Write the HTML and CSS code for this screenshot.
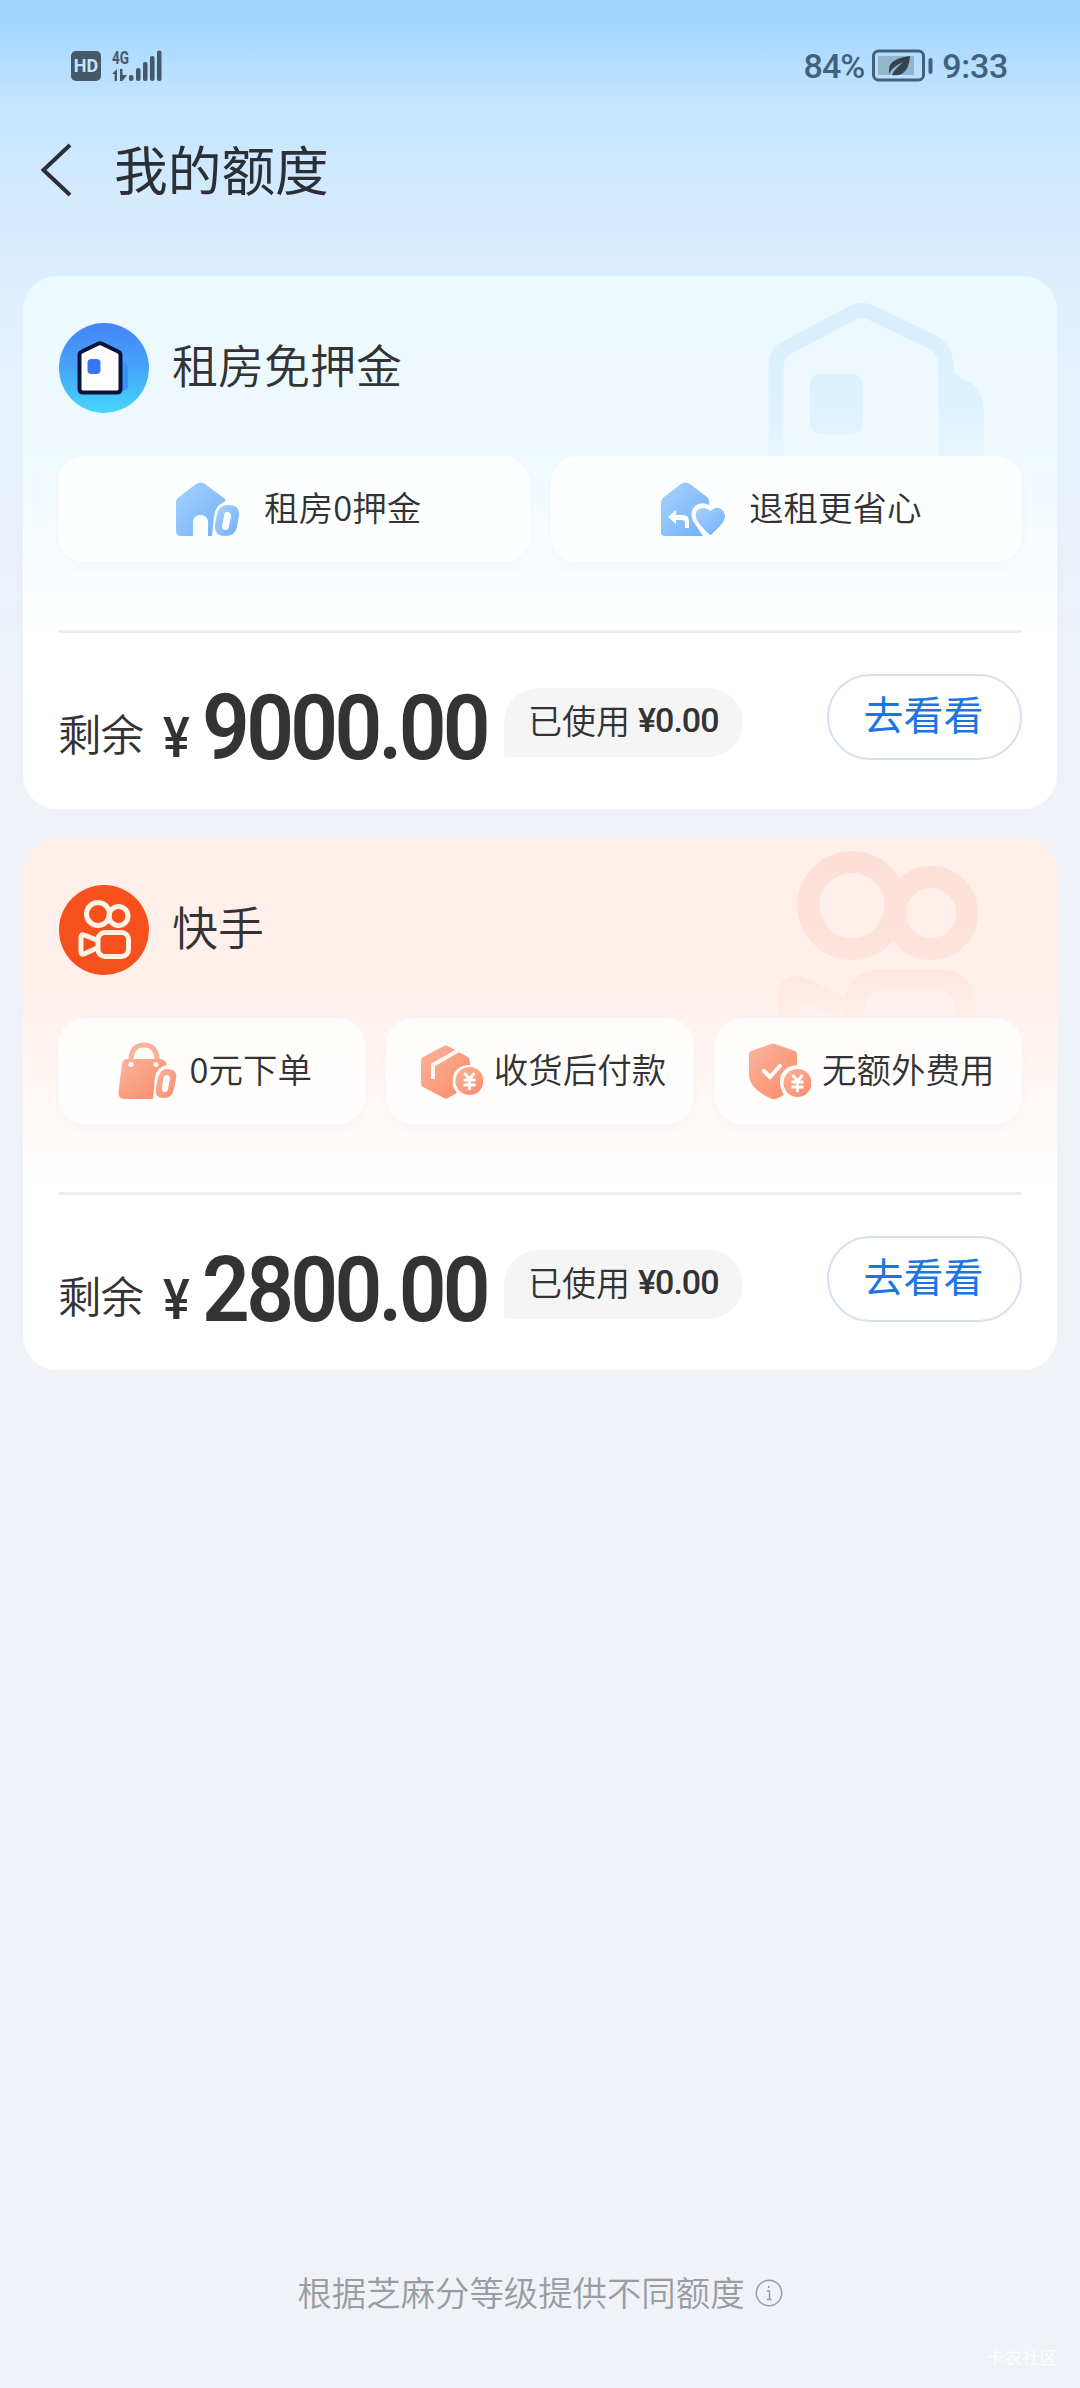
FILE: index.html
```html
<!DOCTYPE html>
<html lang="zh-CN">
<head>
<meta charset="utf-8">
<title>我的额度</title>
<link rel="stylesheet" href="styles.css">
</head>
<body>
<svg class="defs" width="0" height="0" aria-hidden="true">
  <defs>
    <linearGradient id="blue" x1="0" y1="0" x2="1" y2="1"><stop offset="0" stop-color="#a5d3fd"/><stop offset="1" stop-color="#72aff8"/></linearGradient>
    <linearGradient id="coral" x1="0" y1="0" x2="1" y2="1"><stop offset="0" stop-color="#fcb49c"/><stop offset="1" stop-color="#f98a68"/></linearGradient>
    <linearGradient id="logo" x1="0" y1="0" x2="0" y2="1"><stop offset="0" stop-color="#4584fb"/><stop offset=".5" stop-color="#45a4fa"/><stop offset="1" stop-color="#47d6fc"/></linearGradient>
    <linearGradient id="houseFade" gradientUnits="userSpaceOnUse" x1="0" y1="20" x2="0" y2="200"><stop offset="0" stop-color="#d9eefe"/><stop offset=".6" stop-color="#ddf1fe"/><stop offset="1" stop-color="#ebf7ff"/></linearGradient>
    <linearGradient id="camFade" gradientUnits="userSpaceOnUse" x1="0" y1="10" x2="0" y2="190"><stop offset="0" stop-color="#fedfd7"/><stop offset=".6" stop-color="#fee4dc"/><stop offset="1" stop-color="#fff0ec"/></linearGradient>
  </defs>
</svg>
<div class="page">
  <div class="status">
    <div class="status-side">
      <span class="hd">HD</span>
      <svg class="signal" width="52" height="42" viewBox="0 -4 52 42">
        <text class="net" x="1" y="14.500" textLength="17" lengthAdjust="spacingAndGlyphs">4G</text>
        <g class="status-fill">
          <path d="M1 25 6 20V32H3.600V25ZM9 20H11.500V26H16L11.500 32H9Z"/>
          <rect x="18" y="26" width="4.500" height="6" rx="2"/>
          <rect x="25" y="19" width="4.500" height="13" rx="2"/>
          <rect x="32" y="13" width="4.500" height="19" rx="2"/>
          <rect x="39" y="7" width="4.500" height="25" rx="2"/>
          <rect x="46" y="1.500" width="4.500" height="30.500" rx="2"/>
        </g>
      </svg>
    </div>
    <div class="status-side">
      <span class="battery-text">84%</span>
      <svg class="battery" width="62" height="34" viewBox="0 0 62 34">
        <rect x="1.500" y="2" width="50" height="29" rx="5" fill="none" stroke="#42617c" stroke-width="3"/>
        <rect x="6" y="7" width="36" height="19" fill="#92b5ce"/>
        <path d="M38 7C25 9 17 12 17 21V25C20 19 25 16 31 13 26 18 22 21 20 26 32 28 37 20 38 7Z" fill="#35434e"/>
        <rect x="56.500" y="9" width="4" height="16" rx="2" fill="#42617c"/>
      </svg>
      <span class="clock">9:33</span>
    </div>
  </div>

  <header class="nav">
    <svg class="back" width="34" height="54" viewBox="0 0 34 54"><path d="M31 2 4.500 27 31 52" fill="none" stroke="#2b3036" stroke-width="4"/></svg>
    <h1>我的额度</h1>
  </header>

  <main class="cards">
    <section class="card rent">
      <svg class="mark" width="1034" height="180" viewBox="0 0 1034 180">
        <path d="M753 200V90Q753 77 765 71L827 38Q839 31 851 38L909 66Q923 73 923 91V200" fill="none" stroke="url(#houseFade)" stroke-width="15"/>
        <path d="M925 94Q934 98 938 102 961 110 961 136V200H917V94Z" fill="url(#houseFade)"/>
        <rect x="787" y="98" width="53" height="60" rx="11" fill="url(#houseFade)"/>
      </svg>
      <div class="card-head">
        <svg width="90" height="90" viewBox="0 0 90 90">
          <circle cx="45" cy="45" r="45" fill="url(#logo)"/>
          <path d="M63 38Q69 39 69 45V64Q68 68 62 68Z" fill="#3c92fb"/>
          <path d="M20.500 32Q20.500 29.500 23 28.500L39 20.800Q41 19.800 43 20.800L59 28.500Q61.500 29.500 61.500 32V66Q61.500 69.500 58 69.500H24Q20.500 69.500 20.500 66Z" fill="#fff" stroke="#07143a" stroke-width="4"/>
          <rect x="28.500" y="36" width="13" height="15" rx="4" fill="#3478f6"/>
        </svg>
        <h2>租房免押金</h2>
      </div>
      <div class="chips">
        <div class="chip wide">
          <svg width="80" height="60" viewBox="0 0 80 60">
            <path d="M10 24Q10 20 13 18L30 5Q34.500 2 39 5L59 20Q61 22 56 24 49 28 48 38L46 57H42V44Q42 36 34.500 36 27 36 27 44V57H15Q10 57 10 52Z" fill="url(#blue)"/>
            <path d="M62 26Q74 26 73 36L71 48Q69 57 59 57 48 57 49 46L51 35Q53 26 62 26ZM61 33Q58.500 33 58 37L56 47Q56 51 59 51 62.500 51 63 47L65 37Q65 33 61 33Z" fill="url(#blue)" fill-rule="evenodd"/>
          </svg>
          <span>租房0押金</span>
        </div>
        <div class="chip wide">
          <svg width="80" height="60" viewBox="0 0 80 60">
            <path d="M10 23Q10 20 13 18L30 5Q34.500 2 39 5L56 18Q59 20 58 26 50 22 44 27 38 33 42 42L52 57H14Q10 57 10 53Z" fill="url(#blue)"/>
            <path d="M58 31C51 26 43 31 45 38 46 44 52 49 58 55Q59.500 57 61 55C67 49 73 44 74 38 74 30 66 26 61 31Q59.500 32 58 31Z" fill="url(#blue)"/>
            <path d="M17 38 25 31V36H31Q38 36 38 42V49H34V44Q34 41 30 41H25V45Z" fill="#fff"/>
          </svg>
          <span>退租更省心</span>
        </div>
      </div>
      <hr>
      <div class="summary">
        <span class="left">剩余</span>
        <span class="yen"><span>¥</span></span>
        <span class="amount"><span>9000.00</span></span>
        <span class="used">已使用<b>¥0.00</b></span>
        <button type="button">去看看</button>
      </div>
    </section>

    <section class="card kuai">
      <svg class="mark" width="1034" height="179" viewBox="0 0 1034 179">
        <g fill="none" stroke="url(#camFade)" stroke-width="22">
          <circle cx="829" cy="67.500" r="43.500"/>
          <circle cx="908" cy="75" r="36"/>
          <path d="M831 210V171Q831 142 861 142H913Q943 142 943 171V210M766 210V157Q766 147 776 149L820 170"/>
        </g>
      </svg>
      <div class="card-head">
        <svg width="90" height="90" viewBox="0 0 90 90">
          <circle cx="45" cy="45" r="45" fill="#f6511d"/>
          <g fill="none" stroke="#fff3e8" stroke-width="5" stroke-linejoin="round">
            <circle cx="39" cy="29" r="11.500"/>
            <circle cx="59.500" cy="31" r="9.500"/>
            <rect x="39" y="47.500" width="30.500" height="24" rx="7"/>
            <path d="M38 55 25 50Q22 49 22 52V67Q22 70 25 69L38 63"/>
          </g>
        </svg>
        <h2>快手</h2>
      </div>
      <div class="chips">
        <div class="chip">
          <svg class="bag" width="66" height="60" viewBox="0 0 66 60">
            <path d="M17 20V16Q19 4 30 4 41 4 43 16V20" fill="none" stroke="#fbb19b" stroke-width="5"/>
            <path d="M13 18H46Q51 18 53 24 43 26 41 36L39 58H10Q4 58 4.500 51L8 23Q9 18 13 18Z" fill="url(#coral)"/>
            <circle cx="17" cy="23.500" r="2.500" fill="#fff"/><circle cx="42" cy="23.500" r="2.500" fill="#fff"/>
            <path d="M53 28Q64 28 62 38L60 48Q58 57 50 57 40 57 42 47L44 37Q46 28 53 28ZM53 34Q50 34 49.500 37L48 47Q48 51 50.500 51 53.500 51 54 48L56 38Q56 34 53 34Z" fill="url(#coral)" fill-rule="evenodd"/>
          </svg>
          <span>0元下单</span>
        </div>
        <div class="chip">
          <svg width="66" height="60" viewBox="0 0 66 60">
            <path d="M27 5Q29 4 31 5L51 16Q53 17 53 24 39 24 36 36 34 45 40 52L31 57Q29 58 27 57L6 46Q4 45 4 43V20Q4 17 6 16Z" fill="url(#coral)"/>
            <path d="M42 9 16 24V38" fill="none" stroke="#fff8f4" stroke-width="4"/>
            <circle cx="52.500" cy="40" r="14" fill="url(#coral)"/>
            <path d="M47.500 32 52.500 38 57.500 32M46.500 39H58.500M46.500 44H58.500M52.500 38V49" fill="none" stroke="#fff" stroke-width="2.800"/>
          </svg>
          <span>收货后付款</span>
        </div>
        <div class="chip">
          <svg width="66" height="60" viewBox="0 0 66 60">
            <path d="M26 3Q28 2 30 3L50 10Q52 11 52 13V24Q40 25 36 34 33 44 39 54L31 58Q28 59 25 57 3 47 4 32V13Q4 11 6 10Z" fill="url(#coral)"/>
            <path d="M19 30 25 36 35 25" fill="none" stroke="#fff" stroke-width="4" stroke-linecap="round"/>
            <circle cx="52.500" cy="42" r="14" fill="url(#coral)"/>
            <path d="M47.500 34 52.500 40 57.500 34M46.500 41H58.500M46.500 46H58.500M52.500 40V51" fill="none" stroke="#fff" stroke-width="2.800"/>
          </svg>
          <span>无额外费用</span>
        </div>
      </div>
      <hr>
      <div class="summary">
        <span class="left">剩余</span>
        <span class="yen"><span>¥</span></span>
        <span class="amount"><span>2800.00</span></span>
        <span class="used">已使用<b>¥0.00</b></span>
        <button type="button">去看看</button>
      </div>
    </section>
  </main>

  <footer>
    <span>根据芝麻分等级提供不同额度</span>
    <svg width="28" height="28" viewBox="0 0 28 28" fill="none" stroke="#999ca0" stroke-width="1.500"><circle cx="14" cy="14" r="12.700"/><path d="M12 12H14.500V20M12 20.500H16.500M13.700 7V9"/></svg>
  </footer>
  <div class="community">卡农社区</div>
</div>
</body>
</html>
```
FILE: styles.css
```css
* { box-sizing: border-box; }
body {
  margin: 0;
  font-family: "Noto Sans CJK SC", sans-serif;
  color: #333;
}
.defs { position: absolute; }
.page {
  position: relative;
  display: flex;
  flex-direction: column;
  width: 1080px;
  height: 2388px;
  overflow: hidden;
  background: linear-gradient(180deg, #9ed3ff 0, #a3d8ff 30px, #b6deff 65px, #c4e5ff 105px, #cde8ff 155px, #d6ebff 210px, #dceeff 270px, #e5f2fe 380px, #ebf1fb 540px, #eef2f8 700px, #eff3f8 900px);
}

/* status bar */
.status {
  display: flex;
  justify-content: space-between;
  align-items: center;
  height: 132px;
  padding: 0 72px 0 71px;
  color: #42617c;
  font-family: Roboto, sans-serif;
}
.status-side { display: flex; align-items: center; }
.hd {
  width: 30px;
  height: 30px;
  border-radius: 5px;
  background: #45596a;
  color: #c6e5fc;
  font-size: 18px;
  font-weight: 700;
  line-height: 30px;
  text-align: center;
}
.signal { margin-left: 10px; }
.net { font: 700 18px Roboto, sans-serif; fill: #45596a; }
.status-fill { fill: #45596a; }
.battery-text, .clock { font-size: 34px; font-weight: 500; line-height: 34px; }
.battery-text { letter-spacing: -1px; }
.clock { letter-spacing: -.3px; }
.battery { margin: 0 8px 0 8px; }

/* title bar */
.nav {
  display: flex;
  align-items: center;
  height: 76px;
  padding-left: 39px;
}
.nav h1 {
  margin: 0 0 4px 41px;
  font-size: 53.700px;
  font-weight: 400;
  line-height: 70px;
  color: #2b3036;
}

/* cards */
.cards {
  display: flex;
  flex-direction: column;
  gap: 29px;
  padding: 68px 23px 0;
}
.card {
  position: relative;
  height: 533px;
  padding: 47px 35px 0;
  border-radius: 34px;
  overflow: hidden;
}
.rent { background: linear-gradient(180deg, #ecf9ff 0, #edf9ff 150px, #f8fcff 270px, #fff 370px); }
.kuai {
  height: 532px;
  background: linear-gradient(180deg, #ffefe9 0, #fff0ec 150px, #fff8f6 260px, #fff 350px);
}
.mark { position: absolute; left: 0; top: 0; }
.card-head {
  position: relative;
  display: flex;
  align-items: center;
  gap: 23px;
  height: 90px;
}
.card-head svg { margin-left: 1px; }
.card-head h2 {
  margin: 0 0 11px;
  font-size: 46px;
  font-weight: 350;
  line-height: 60px;
}
.chips {
  position: relative;
  display: flex;
  gap: 21px;
  margin-top: 43px;
}
.chip {
  display: flex;
  flex: 1;
  align-items: center;
  justify-content: center;
  gap: 11px;
  height: 106px;
  padding-left: 3px;
  border-radius: 27px;
  background: rgba(255, 255, 255, .76);
  box-shadow: 0 8px 14px rgba(60, 60, 80, .025);
  font-size: 34.500px;
  font-weight: 350;
  white-space: nowrap;
}
.chip span { margin-bottom: 6px; }
.bag { margin-right: -2px; }
.wide { gap: 18px; padding-left: 0; }
hr {
  height: 3px;
  margin: 68px 0 0;
  border: 0;
  background: #eee;
}

/* balance row */
.summary {
  display: flex;
  align-items: flex-end;
  height: 127px;
}
.left {
  width: 88px;
  margin-bottom: 2px;
  font-size: 43.500px;
  font-weight: 350;
  line-height: 50px;
  letter-spacing: -1px;
}
.yen {
  width: 39px;
  height: 50px;
  margin-left: 17px;
  font: 500 56px/56px Roboto, sans-serif;
}
.amount {
  width: 302px;
  height: 77px;
  font: 600 91px/90px Roboto, sans-serif;
}
.yen span, .amount span {
  display: inline-block;
  transform: scaleX(.9);
  transform-origin: 0 0;
}
.amount span {
  letter-spacing: -4px;
  transform: scaleX(.92);
}
.used {
  display: flex;
  align-items: center;
  width: 239px;
  height: 69px;
  margin-bottom: 3px;
  padding: 0 0 6px 24px;
  border-radius: 35px 35px 35px 4px;
  background: #f5f5f5;
  font-size: 34px;
  font-weight: 350;
  white-space: nowrap;
}
.used b {
  margin-left: 8px;
  font: 500 34px/40px Roboto, sans-serif;
  letter-spacing: -1px;
}
button {
  width: 195px;
  height: 86px;
  margin: 0 0 0 auto;
  padding: 0 2px 8px 0;
  border: 2px solid #d6e1f0;
  border-radius: 43px;
  background: #fff;
  color: #1b75e4;
  font: 400 40px/60px "Noto Sans CJK SC", sans-serif;
}

footer {
  display: flex;
  align-items: center;
  justify-content: center;
  gap: 10px;
  height: 50px;
  margin-top: auto;
  color: #999ca0;
  font-size: 34.400px;
  font-weight: 350;
}
footer span { margin-bottom: 5px; }
.community {
  height: 30px;
  margin: 24px 23px 16px 0;
  color: #fbfdff;
  font-size: 17.600px;
  line-height: 30px;
  text-align: right;
}
```
